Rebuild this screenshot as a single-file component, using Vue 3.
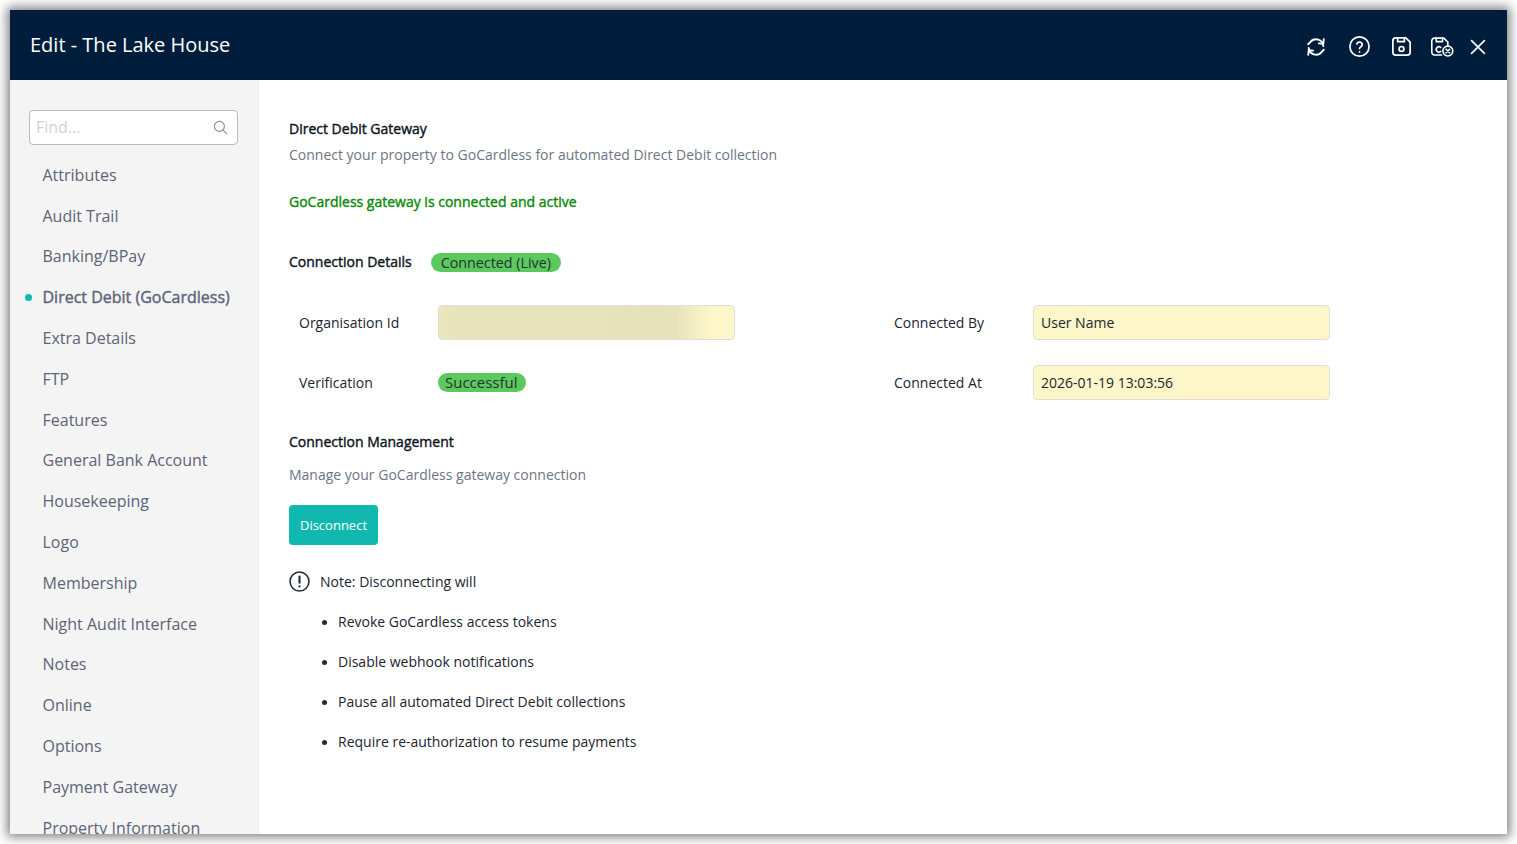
<template>
  <div class="page">
    <div class="dialog">
      <header class="dialog-head">
        <h1 class="dialog-title">Edit - The Lake House</h1>
        <div class="head-icons">
          <svg class="ico sync" viewBox="0 0 24 24" fill="none" stroke="currentColor" stroke-width="2" stroke-linecap="round" stroke-linejoin="round">
            <path d="M20 11a8 8 0 0 0-14.3-4.3L3.5 9" />
            <path d="M20.5 3.5 20 8.5 15 8" />
            <path d="M4 13a8 8 0 0 0 14.3 4.3l2.2-2.3" />
            <path d="M3.5 20.5 4 15.5 9 16" />
          </svg>
          <svg class="ico help" viewBox="0 0 24 24" fill="none" stroke="currentColor" stroke-width="1.8" stroke-linecap="round" stroke-linejoin="round">
            <circle cx="12" cy="12" r="10" />
            <path d="M9.2 9.2a2.9 2.9 0 0 1 5.6 1c0 1.9-2.8 2.5-2.8 4" />
            <path d="M12 17.6v.1" />
          </svg>
          <svg class="ico save" viewBox="0 0 24 24" fill="none" stroke="currentColor" stroke-width="1.8" stroke-linecap="round" stroke-linejoin="round">
            <path d="M6 3h10.5L21 7.5V18a3 3 0 0 1-3 3H6a3 3 0 0 1-3-3V6a3 3 0 0 1 3-3z" />
            <path d="M8 3v4h7V3" />
            <circle cx="12" cy="14.5" r="2.5" />
          </svg>
          <svg class="ico save-x" viewBox="0 0 28 24" fill="none" stroke="currentColor" stroke-width="1.8" stroke-linecap="round" stroke-linejoin="round">
            <path d="M13 21H5a3 3 0 0 1-3-3V5a3 3 0 0 1 3-3h10.500L20 6.500V10" />
            <path d="M7 2v4h7V2" />
            <path d="M12 12.500a3 3 0 1 0 0 4.500" />
            <circle cx="20" cy="16.500" r="5.500" />
            <path d="m18 14.500 4 4m0-4-4 4" />
          </svg>
          <svg class="ico close" viewBox="0 0 24 24" fill="none" stroke="currentColor" stroke-width="1.8" stroke-linecap="round">
            <path d="M5 5l14 14M19 5 5 19" />
          </svg>
        </div>
      </header>

      <div class="dialog-body">
        <aside class="sidebar">
          <div class="find">
            <span class="find-text">Find...</span>
            <svg class="find-ico" viewBox="0 0 16 16" fill="none" stroke="currentColor" stroke-width="1.200" stroke-linecap="round">
              <circle cx="6.800" cy="6.800" r="5.300" />
              <path d="m10.800 10.800 4 4" />
            </svg>
          </div>
          <nav class="side-nav">
            <div
              v-for="item in navItems"
              :key="item"
              class="nav-item"
              :class="{ active: item === activeItem }"
            >
              {{ item }}
            </div>
          </nav>
        </aside>

        <main class="content">
          <h2 class="sec-title">Direct Debit Gateway</h2>
          <p class="muted intro">Connect your property to GoCardless for automated Direct Debit collection</p>
          <p class="status-ok">GoCardless gateway is connected and active</p>

          <div class="details-head">
            <h2 class="sec-title">Connection Details</h2>
            <span class="pill pill-live">Connected (Live)</span>
          </div>

          <div class="form-grid">
            <label class="field-label">Organisation Id</label>
            <div class="field field-blur"></div>
            <label class="field-label right">Connected By</label>
            <div class="field">User Name</div>

            <label class="field-label">Verification</label>
            <div><span class="pill pill-ok">Successful</span></div>
            <label class="field-label right">Connected At</label>
            <div class="field">2026-01-19 13:03:56</div>
          </div>

          <h2 class="sec-title manage-title">Connection Management</h2>
          <p class="muted manage-sub">Manage your GoCardless gateway connection</p>
          <button class="btn-disconnect" type="button">Disconnect</button>

          <div class="note">
            <svg class="note-ico" viewBox="0 0 20 20" fill="none" stroke="currentColor" stroke-width="1.500" stroke-linecap="round">
              <circle cx="10" cy="10" r="9" />
              <path d="M10 5.200v6" stroke-width="2" />
              <path d="M10 14.500v.2" stroke-width="2" />
            </svg>
            <span>Note: Disconnecting will</span>
          </div>
          <ul class="note-list">
            <li v-for="line in noteLines" :key="line">{{ line }}</li>
          </ul>
        </main>
      </div>
    </div>
  </div>
</template>

<script setup>
const activeItem = 'Direct Debit (GoCardless)'

const navItems = [
  'Attributes',
  'Audit Trail',
  'Banking/BPay',
  'Direct Debit (GoCardless)',
  'Extra Details',
  'FTP',
  'Features',
  'General Bank Account',
  'Housekeeping',
  'Logo',
  'Membership',
  'Night Audit Interface',
  'Notes',
  'Online',
  'Options',
  'Payment Gateway',
  'Property Information'
]

const noteLines = [
  'Revoke GoCardless access tokens',
  'Disable webhook notifications',
  'Pause all automated Direct Debit collections',
  'Require re-authorization to resume payments'
]
</script>

<style>
html,
body {
  margin: 0;
  background: #fff;
}
</style>

<style scoped>
.page {
  width: 1517px;
  height: 844px;
  padding: 10px;
  box-sizing: border-box;
  overflow: hidden;
  font-family: "Open Sans", "Noto Sans", sans-serif;
  font-size: 14px;
  color: #1b2430;
  background: #fff;
}

.dialog {
  width: 1497px;
  height: 824px;
  display: flex;
  flex-direction: column;
  background: #fff;
  box-shadow: 0 0 10px 3px rgba(0, 0, 0, 0.5);
  overflow: hidden;
}

.dialog-head {
  height: 70px;
  flex: none;
  display: flex;
  align-items: center;
  justify-content: space-between;
  padding: 0 18px 0 20px;
  background: #001e3c;
  color: #fff;
}

.dialog-title {
  margin: 0;
  font-size: 20px;
  font-weight: 400;
  line-height: 70px;
}

.head-icons {
  display: flex;
  align-items: center;
  margin-top: 3px;
}

.ico {
  display: block;
  width: 22px;
  height: 22px;
}

.ico.help {
  width: 23px;
  height: 23px;
  margin-left: 21px;
}

.ico.save {
  width: 23px;
  height: 23px;
  margin-left: 19px;
}

.ico.save-x {
  width: 25px;
  height: 22px;
  margin-left: 17px;
}

.ico.close {
  margin-left: 12px;
}

.dialog-body {
  flex: 1;
  display: flex;
  min-height: 0;
}

.sidebar {
  width: 249px;
  flex: none;
  box-sizing: border-box;
  padding: 30px 20px 0 19px;
  background: #f4f4f4;
  border-right: 1px solid #ececec;
  overflow: hidden;
}

.find {
  height: 35px;
  box-sizing: border-box;
  display: flex;
  align-items: center;
  justify-content: space-between;
  padding: 0 9px 0 6px;
  background: #fff;
  border: 1px solid #b9b9b9;
  border-radius: 4px;
}

.find-text {
  margin-top: -2px;
  font-size: 16px;
  color: #cfd3d8;
}

.find-ico {
  width: 15px;
  height: 15px;
  color: #8b8b8b;
}

.side-nav {
  margin-top: 9.8px;
}

.nav-item {
  position: relative;
  height: 40.8px;
  line-height: 40.8px;
  padding-left: 13.5px;
  font-size: 16px;
  color: #5c6478;
  white-space: nowrap;
}

.nav-item.active {
  -webkit-text-stroke: 0.4px currentColor;
}

.nav-item.active::before {
  content: "";
  position: absolute;
  left: -4px;
  top: 17px;
  width: 7px;
  height: 7px;
  border-radius: 50%;
  background: #11b8b0;
}

.content {
  flex: 1;
  min-width: 0;
  padding: 39px 30px 0;
  color: #1b2430;
}

.sec-title {
  margin: 0;
  font-size: 14px;
  font-weight: 400;
  -webkit-text-stroke: 0.4px currentColor;
  line-height: 20px;
  color: #0b1420;
}

.muted {
  margin: 0;
  color: #6d7582;
  line-height: 20px;
}

.intro {
  margin-top: 6px;
}

.status-ok {
  margin: 27px 0 0;
  -webkit-text-stroke: 0.4px currentColor;
  line-height: 20px;
  color: #0a8a0a;
}

.details-head {
  display: flex;
  align-items: center;
  gap: 19px;
  margin-top: 40px;
}

.pill {
  display: inline-block;
  border-radius: 10px;
  line-height: 19px;
  background: #5cc95c;
  color: #263238;
}

.pill-live {
  padding: 0 10px;
  font-size: 14.3px;
}

.pill-ok {
  padding: 0 8px 0 7px;
  font-size: 15px;
}

.form-grid {
  display: grid;
  grid-template-columns: 149px 297px 298px 297px;
  grid-auto-rows: 35px;
  row-gap: 25px;
  align-items: center;
  margin-top: 33px;
}

.field-label {
  padding-left: 10px;
}

.field-label.right {
  padding-left: 159px;
  white-space: nowrap;
}

.field {
  height: 35px;
  box-sizing: border-box;
  padding: 0 7px;
  line-height: 34px;
  background: #fdf6c8;
  border: 1px solid #dedede;
  border-radius: 4px;
  color: #1b2430;
}

.field-blur {
  background: linear-gradient(90deg, #ece7bd 0%, #e7e3bb 6%, #e6e2ba 80%, #fdf6c8 92%);
}

.manage-title {
  margin-top: 32px;
}

.manage-sub {
  margin-top: 13px;
}

.btn-disconnect {
  display: block;
  width: 89px;
  height: 40px;
  margin-top: 20px;
  padding: 0;
  border: 0;
  border-radius: 4px;
  background: #11b8b0;
  color: #fff;
  font-family: inherit;
  font-size: 13px;
}

.note {
  display: flex;
  align-items: center;
  gap: 10px;
  margin-top: 26px;
  height: 20px;
}

.note-ico {
  width: 21px;
  height: 21px;
  flex: none;
  color: #1f2a3a;
}

.note-list {
  margin: 11px 0 0;
  padding: 0 0 0 33px;
  list-style: none;
}

.note-list li {
  display: flex;
  align-items: center;
  gap: 11px;
  height: 40px;
  line-height: 40px;
}

.note-list li::before {
  content: "";
  width: 5px;
  height: 5px;
  flex: none;
  border-radius: 50%;
  background: #1f2a3a;
}
</style>
